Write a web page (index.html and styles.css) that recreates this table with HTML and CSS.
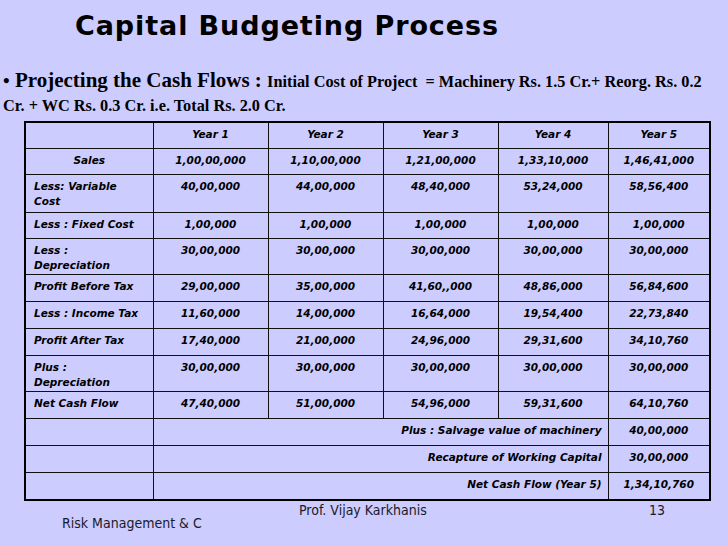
FILE: index.html
```html
<!DOCTYPE html>
<html>
<head>
<meta charset="utf-8">
<link rel="stylesheet" href="styles.css">
</head>
<body>
<div class="slide">
  <h1 class="title">Capital Budgeting Process</h1>
  <p class="intro"><span class="bullet">•</span> <span class="lead">Projecting the Cash Flows :</span> <span class="detail">Initial Cost of Project &nbsp;= Machinery Rs. 1.5 Cr.+ Reorg. Rs. 0.2<br>Cr. + WC Rs. 0.3 Cr. i.e. Total Rs. 2.0 Cr.</span></p>
  <table class="cf">
    <colgroup>
      <col class="c-label"><col class="c-yr"><col class="c-yr"><col class="c-yr"><col class="c-y4"><col class="c-y5">
    </colgroup>
    <tr class="r-hdr"><td></td><td class="v">Year 1</td><td class="v">Year 2</td><td class="v">Year 3</td><td class="v">Year 4</td><td class="v">Year 5</td></tr>
    <tr class="r1"><td class="v">Sales</td><td class="v">1,00,00,000</td><td class="v">1,10,00,000</td><td class="v">1,21,00,000</td><td class="v">1,33,10,000</td><td class="v">1,46,41,000</td></tr>
    <tr class="r2a"><td class="l">Less: Variable<br>Cost</td><td class="v">40,00,000</td><td class="v">44,00,000</td><td class="v">48,40,000</td><td class="v">53,24,000</td><td class="v">58,56,400</td></tr>
    <tr class="r1"><td class="l">Less : Fixed Cost</td><td class="v">1,00,000</td><td class="v">1,00,000</td><td class="v">1,00,000</td><td class="v">1,00,000</td><td class="v">1,00,000</td></tr>
    <tr class="r2"><td class="l">Less :<br>Depreciation</td><td class="v">30,00,000</td><td class="v">30,00,000</td><td class="v">30,00,000</td><td class="v">30,00,000</td><td class="v">30,00,000</td></tr>
    <tr class="r1b"><td class="l">Profit Before Tax</td><td class="v">29,00,000</td><td class="v">35,00,000</td><td class="v">41,60,,000</td><td class="v">48,86,000</td><td class="v">56,84,600</td></tr>
    <tr class="r1b"><td class="l">Less : Income Tax</td><td class="v">11,60,000</td><td class="v">14,00,000</td><td class="v">16,64,000</td><td class="v">19,54,400</td><td class="v">22,73,840</td></tr>
    <tr class="r1b"><td class="l">Profit After Tax</td><td class="v">17,40,000</td><td class="v">21,00,000</td><td class="v">24,96,000</td><td class="v">29,31,600</td><td class="v">34,10,760</td></tr>
    <tr class="r2"><td class="l">Plus :<br>Depreciation</td><td class="v">30,00,000</td><td class="v">30,00,000</td><td class="v">30,00,000</td><td class="v">30,00,000</td><td class="v">30,00,000</td></tr>
    <tr class="r1b"><td class="l">Net Cash Flow</td><td class="v">47,40,000</td><td class="v">51,00,000</td><td class="v">54,96,000</td><td class="v">59,31,600</td><td class="v">64,10,760</td></tr>
    <tr class="r1b"><td></td><td class="rt" colspan="4">Plus : Salvage value of machinery</td><td class="v">40,00,000</td></tr>
    <tr class="r1b"><td></td><td class="rt" colspan="4">Recapture of Working Capital</td><td class="v">30,00,000</td></tr>
    <tr class="r1c"><td></td><td class="rt" colspan="4">Net Cash Flow (Year 5)</td><td class="v">1,34,10,760</td></tr>
  </table>
  <div class="foot">
    <span class="foot-left">Risk Management &amp; C</span>
    <span class="foot-mid">Prof. Vijay Karkhanis</span>
    <span class="foot-num">13</span>
  </div>
</div>
</body>
</html>
```
FILE: styles.css
```css
html, body {
  margin: 0;
  padding: 0;
  background: #ccccff;
}
.slide {
  width: 728px;
  height: 546px;
  background: #ccccff;
  color: #000;
  overflow: hidden;
}
.title {
  margin: 0;
  height: 69px;
  box-sizing: border-box;
  padding: 8px 0 0 75px;
  font-family: "DejaVu Sans", sans-serif;
  font-weight: bold;
  font-size: 27px;
  letter-spacing: 0.9px;
  line-height: 36px;
  color: #000;
}
.intro {
  margin: 0;
  height: 46px;
  padding-left: 3px;
  font-family: "Liberation Serif", serif;
  font-weight: bold;
  line-height: 23px;
  font-size: 21px;
  color: #000;
  white-space: nowrap;
}
.bullet {
  font-size: 19px;
}
.lead {
  font-size: 21px;
}
.detail {
  font-size: 16.3px;
}
.cf {
  margin: 6px 0 0 24px;
  border-collapse: collapse;
  table-layout: fixed;
  width: 687px;
  border: 2px solid #000;
  font-family: "DejaVu Sans", sans-serif;
  font-weight: bold;
  font-style: italic;
  font-size: 10.5px;
  line-height: 15px;
  color: #000;
}
.c-label { width: 128px; }
.c-yr { width: 115px; }
.c-y4 { width: 110px; }
.c-y5 { width: 102px; }
.cf td {
  border: 1px solid #111;
  vertical-align: top;
  padding: 4px 8px 0 8px;
  box-sizing: border-box;
}
.cf td.v { text-align: center; }
.cf td.l { text-align: left; }
.cf td.rt { text-align: right; padding-right: 6px; }
.r-hdr { height: 26px; }
.r1 { height: 26px; }
.r2a { height: 38px; }
.r2 { height: 36px; }
.r1b { height: 27px; }
.r1c { height: 28px; }
.foot {
  display: flex;
  align-items: flex-start;
  font-family: "DejaVu Sans Condensed", "DejaVu Sans", sans-serif;
  font-size: 14px;
  color: #1a1a2a;
  line-height: 16px;
}
.foot-left {
  display: block;
  width: 299px;
  box-sizing: border-box;
  padding: 14px 0 0 62px;
}
.foot-mid {
  display: block;
  width: 350px;
  padding-top: 1px;
}
.foot-num {
  display: block;
  padding-top: 1px;
}
```
